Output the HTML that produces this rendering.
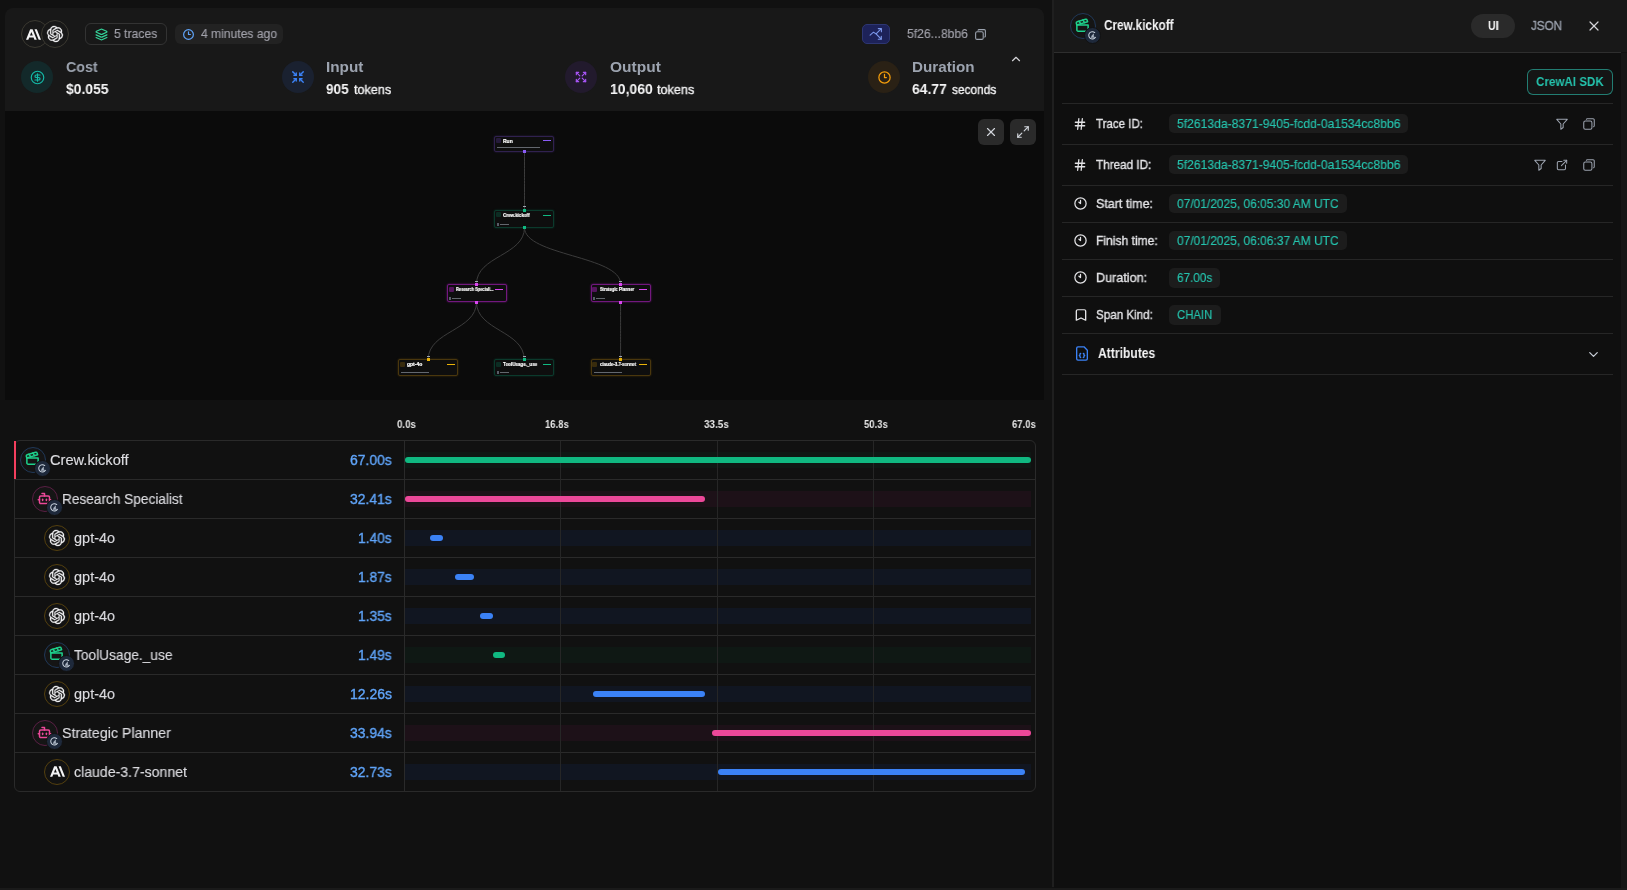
<!DOCTYPE html>
<html><head><meta charset="utf-8"><style>
html,body{margin:0;padding:0;width:1627px;height:890px;overflow:hidden;background:#111111;font-family:"Liberation Sans", sans-serif}
.t{position:absolute;line-height:1;white-space:nowrap;transform-origin:0 0;will-change:transform}
.b,.c{position:absolute}
.c{border-radius:50%;box-sizing:border-box}
svg{position:absolute;overflow:visible}
</style></head><body>
<div class="b" style="left:5px;top:8px;width:1039px;height:103px;background:#181818;border-radius:8px 8px 0 0"></div>
<div class="b" style="left:5px;top:111px;width:1039px;height:289px;background:#0b0b0b"></div>
<div class="b" style="left:1052px;top:0px;width:2px;height:887px;background:#1f1f1f"></div>
<div class="b" style="left:1054px;top:52px;width:567px;height:838px;background:#0f0f0f"></div>
<div class="b" style="left:1054px;top:0px;width:573px;height:52px;background:#181818"></div>
<div class="b" style="left:1054px;top:52px;width:567px;height:1px;background:#2e2e2e"></div>
<div class="b" style="left:1621px;top:53px;width:6px;height:837px;background:#161616"></div>
<div class="b" style="left:0px;top:888px;width:1627px;height:2px;background:#1a1a1a"></div>
<div class="c" style="left:20.5px;top:20.0px;width:28px;height:28px;background:#181818;border:1px solid #3b3931;"></div>
<div class="b" style="left:85.3px;top:23px;width:81.7px;height:21.8px;border:1px solid #333;border-radius:6px;box-sizing:border-box"></div>
<div class="b" style="left:175.3px;top:24px;width:107.5px;height:20px;background:#222;border-radius:6px"></div>
<div class="b" style="left:862px;top:24px;width:28px;height:19.5px;background:#1d2259;border:1px solid #2d3672;border-radius:5px;box-sizing:border-box"></div>
<div class="c" style="left:21.0px;top:61.0px;width:32px;height:32px;background:#13292a;"></div>
<div class="c" style="left:282.0px;top:61.0px;width:32px;height:32px;background:#1a2130;"></div>
<div class="c" style="left:565.0px;top:61.0px;width:32px;height:32px;background:#221a2d;"></div>
<div class="c" style="left:868.0px;top:61.0px;width:32px;height:32px;background:#2a2115;"></div>
<div class="b" style="left:978px;top:119px;width:26px;height:26px;background:#2a2a2a;border-radius:6px"></div>
<div class="b" style="left:1010px;top:119px;width:26px;height:26px;background:#2a2a2a;border-radius:6px"></div>
<div class="b" style="left:13.5px;top:440px;width:1022px;height:352px;border:1px solid #2a2a2a;border-radius:6px;box-sizing:border-box"></div>
<div class="b" style="left:14px;top:479px;width:1021px;height:1px;background:#2a2a2a"></div>
<div class="b" style="left:14px;top:518px;width:1021px;height:1px;background:#2a2a2a"></div>
<div class="b" style="left:14px;top:557px;width:1021px;height:1px;background:#2a2a2a"></div>
<div class="b" style="left:14px;top:596px;width:1021px;height:1px;background:#2a2a2a"></div>
<div class="b" style="left:14px;top:635px;width:1021px;height:1px;background:#2a2a2a"></div>
<div class="b" style="left:14px;top:674px;width:1021px;height:1px;background:#2a2a2a"></div>
<div class="b" style="left:14px;top:713px;width:1021px;height:1px;background:#2a2a2a"></div>
<div class="b" style="left:14px;top:752px;width:1021px;height:1px;background:#2a2a2a"></div>
<div class="b" style="left:404px;top:441px;width:1px;height:350px;background:#2a2a2a"></div>
<div class="b" style="left:14px;top:441px;width:2px;height:38px;background:#f43f5e"></div>
<div class="b" style="left:405px;top:451.5px;width:626.3px;height:16px;background:#0f1814"></div>
<div class="b" style="left:405px;top:490.5px;width:626.3px;height:16px;background:#1d1118"></div>
<div class="b" style="left:405px;top:529.5px;width:626.3px;height:16px;background:#111621"></div>
<div class="b" style="left:405px;top:568.5px;width:626.3px;height:16px;background:#111621"></div>
<div class="b" style="left:405px;top:607.5px;width:626.3px;height:16px;background:#111621"></div>
<div class="b" style="left:405px;top:646.5px;width:626.3px;height:16px;background:#0f1814"></div>
<div class="b" style="left:405px;top:685.5px;width:626.3px;height:16px;background:#111621"></div>
<div class="b" style="left:405px;top:724.5px;width:626.3px;height:16px;background:#1d1118"></div>
<div class="b" style="left:405px;top:763.5px;width:626.3px;height:16px;background:#111621"></div>
<div class="b" style="left:560px;top:441px;width:1px;height:350px;background:#262626"></div>
<div class="b" style="left:717px;top:441px;width:1px;height:350px;background:#262626"></div>
<div class="b" style="left:873px;top:441px;width:1px;height:350px;background:#262626"></div>
<div class="b" style="left:404.6px;top:456.5px;width:626.6999999999999px;height:6px;background:#10b981;border-radius:3px"></div>
<div class="b" style="left:404.8px;top:495.5px;width:299.90000000000003px;height:6px;background:#ec4899;border-radius:3px"></div>
<div class="b" style="left:429.6px;top:534.5px;width:13.399999999999977px;height:6px;background:#3b82f6;border-radius:3px"></div>
<div class="b" style="left:455.2px;top:573.5px;width:18.80000000000001px;height:6px;background:#3b82f6;border-radius:3px"></div>
<div class="b" style="left:480px;top:612.5px;width:13px;height:6px;background:#3b82f6;border-radius:3px"></div>
<div class="b" style="left:493px;top:651.5px;width:12.100000000000023px;height:6px;background:#10b981;border-radius:3px"></div>
<div class="b" style="left:592.8px;top:690.5px;width:112.40000000000009px;height:6px;background:#3b82f6;border-radius:3px"></div>
<div class="b" style="left:712px;top:729.5px;width:319.20000000000005px;height:6px;background:#ec4899;border-radius:3px"></div>
<div class="b" style="left:718.2px;top:768.5px;width:307.20000000000005px;height:6px;background:#3b82f6;border-radius:3px"></div>
<div class="b" style="left:1471px;top:14px;width:44px;height:23.7px;background:#2a2a2a;border-radius:12px"></div>
<div class="b" style="left:1527px;top:69px;width:86px;height:26px;border:1px solid rgba(45,212,191,0.55);border-radius:6px;box-sizing:border-box;background:#151515"></div>
<div class="b" style="left:1062px;top:103px;width:551px;height:1px;background:#262626"></div>
<div class="b" style="left:1062px;top:144px;width:551px;height:1px;background:#262626"></div>
<div class="b" style="left:1062px;top:185px;width:551px;height:1px;background:#262626"></div>
<div class="b" style="left:1062px;top:222px;width:551px;height:1px;background:#262626"></div>
<div class="b" style="left:1062px;top:259px;width:551px;height:1px;background:#262626"></div>
<div class="b" style="left:1062px;top:296px;width:551px;height:1px;background:#262626"></div>
<div class="b" style="left:1062px;top:333px;width:551px;height:1px;background:#262626"></div>
<div class="b" style="left:1062px;top:374px;width:551px;height:1px;background:#262626"></div>
<div class="b" style="left:1169px;top:113.7px;width:239px;height:19.6px;background:#1c1c1c;border-radius:5px"></div>
<div class="b" style="left:1169px;top:154.5px;width:239px;height:19.6px;background:#1c1c1c;border-radius:5px"></div>
<div class="b" style="left:1169px;top:193.89999999999998px;width:178px;height:19.6px;background:#1c1c1c;border-radius:5px"></div>
<div class="b" style="left:1169px;top:230.89999999999998px;width:178px;height:19.6px;background:#1c1c1c;border-radius:5px"></div>
<div class="b" style="left:1169px;top:268.0px;width:51px;height:19.6px;background:#1c1c1c;border-radius:5px"></div>
<div class="b" style="left:1169px;top:305.09999999999997px;width:52px;height:19.6px;background:#1c1c1c;border-radius:5px"></div>
<div class="c" style="left:20.0px;top:446.5px;width:26px;height:26px;background:#151515;border:1px solid #203858;"></div>
<svg style="left:25.0px;top:451.0px" width="15" height="15" viewBox="0 0 24 24" fill="none" stroke="#1ed18c" stroke-width="2.4" stroke-linecap="round" stroke-linejoin="round"><path d="M20.2 6 3 11l-.9-2.4c-.3-1.1.3-2.2 1.3-2.5l13.5-4c1.1-.3 2.2.3 2.5 1.3Z"/><path d="m6.2 5.3 3.1 3.9"/><path d="m12.4 3.4 3.1 4"/><path d="M3 11h18v8a2 2 0 0 1-2 2H5a2 2 0 0 1-2-2Z"/></svg>
<div class="c" style="left:33.5px;top:460.0px;width:17px;height:17px;background:#1e293b;border:1px solid #111111;;border-width:1.5px"></div>
<svg style="left:36.5px;top:463.0px" width="11" height="11" viewBox="0 0 24 24" fill="none" stroke="#cbd5e1" stroke-width="2.2" stroke-linecap="round" stroke-linejoin="round"><path d="M17 5.5A8 8 0 1 0 18.5 16"/><path d="M9.5 16.5c.5-3.5 2.5-6.5 5-8-.8 2.5-.3 5.5 1.5 8z" fill="#aab4c3" stroke-width="1"/></svg>
<div class="c" style="left:32.0px;top:485.5px;width:26px;height:26px;background:#151515;border:1px solid #5a1f44;"></div>
<svg style="left:36.5px;top:490.5px" width="15" height="15" viewBox="0 0 24 24" fill="none" stroke="#ec4899" stroke-width="2.4" stroke-linecap="round" stroke-linejoin="round"><path d="M12 8V4H8"/><rect width="16" height="12" x="4" y="8" rx="2"/><path d="M2 14h2"/><path d="M20 14h2"/><path d="M15 13v2"/><path d="M9 13v2"/></svg>
<div class="c" style="left:45.5px;top:499.2px;width:17px;height:17px;background:#1e293b;border:1px solid #111111;;border-width:1.5px"></div>
<svg style="left:48.5px;top:502.2px" width="11" height="11" viewBox="0 0 24 24" fill="none" stroke="#cbd5e1" stroke-width="2.2" stroke-linecap="round" stroke-linejoin="round"><path d="M17 5.5A8 8 0 1 0 18.5 16"/><path d="M9.5 16.5c.5-3.5 2.5-6.5 5-8-.8 2.5-.3 5.5 1.5 8z" fill="#aab4c3" stroke-width="1"/></svg>
<div class="c" style="left:44.0px;top:524.5px;width:26px;height:26px;background:#121212;border:1px solid #54400f;"></div>
<svg style="left:49.0px;top:529.5px" width="16" height="16" viewBox="0 0 24 24" fill="#f4f4f5" stroke="#f4f4f5" stroke-width="0.5"><path d="M22.2819 9.8211a5.9847 5.9847 0 0 0-.5157-4.9108 6.0462 6.0462 0 0 0-6.5098-2.9A6.0651 6.0651 0 0 0 4.9807 4.1818a5.9847 5.9847 0 0 0-3.9977 2.9 6.0462 6.0462 0 0 0 .7427 7.0966 5.98 5.98 0 0 0 .511 4.9107 6.051 6.051 0 0 0 6.5146 2.9001A5.9847 5.9847 0 0 0 13.2599 24a6.0557 6.0557 0 0 0 5.7718-4.2058 5.9894 5.9894 0 0 0 3.9977-2.9001 6.0557 6.0557 0 0 0-.7475-7.0729zm-9.022 12.6081a4.4755 4.4755 0 0 1-2.8764-1.0408l.1419-.0804 4.7783-2.7582a.7948.7948 0 0 0 .3927-.6813v-6.7369l2.02 1.1686a.071.071 0 0 1 .038.052v5.5826a4.504 4.504 0 0 1-4.4945 4.4944zm-9.6607-4.1254a4.4708 4.4708 0 0 1-.5346-3.0137l.142.0852 4.783 2.7582a.7712.7712 0 0 0 .7806 0l5.8428-3.3685v2.3324a.0804.0804 0 0 1-.0332.0615L9.74 19.9502a4.4992 4.4992 0 0 1-6.1408-1.6464zM2.3408 7.8956a4.485 4.485 0 0 1 2.3655-1.9728V11.6a.7664.7664 0 0 0 .3879.6765l5.8144 3.3543-2.0201 1.1685a.0757.0757 0 0 1-.071 0l-4.8303-2.7865A4.504 4.504 0 0 1 2.3408 7.872zm16.5963 3.8558L13.1038 8.364 15.1192 7.2a.0757.0757 0 0 1 .071 0l4.8303 2.7913a4.4944 4.4944 0 0 1-.6765 8.1042v-5.6772a.79.79 0 0 0-.407-.667zm2.0107-3.0231l-.142-.0852-4.7735-2.7818a.7759.7759 0 0 0-.7854 0L9.409 9.2297V6.8974a.0662.0662 0 0 1 .0284-.0615l4.8303-2.7866a4.4992 4.4992 0 0 1 6.6802 4.66zM8.3065 12.863l-2.02-1.1638a.0804.0804 0 0 1-.038-.0567V6.0742a4.4992 4.4992 0 0 1 7.3757-3.4537l-.142.0805L8.704 5.459a.7948.7948 0 0 0-.3927.6813zm1.0976-2.3654l2.602-1.4998 2.6069 1.4998v2.9994l-2.5974 1.4997-2.6067-1.4997Z"/></svg>
<div class="c" style="left:44.0px;top:563.5px;width:26px;height:26px;background:#121212;border:1px solid #54400f;"></div>
<svg style="left:49.0px;top:568.5px" width="16" height="16" viewBox="0 0 24 24" fill="#f4f4f5" stroke="#f4f4f5" stroke-width="0.5"><path d="M22.2819 9.8211a5.9847 5.9847 0 0 0-.5157-4.9108 6.0462 6.0462 0 0 0-6.5098-2.9A6.0651 6.0651 0 0 0 4.9807 4.1818a5.9847 5.9847 0 0 0-3.9977 2.9 6.0462 6.0462 0 0 0 .7427 7.0966 5.98 5.98 0 0 0 .511 4.9107 6.051 6.051 0 0 0 6.5146 2.9001A5.9847 5.9847 0 0 0 13.2599 24a6.0557 6.0557 0 0 0 5.7718-4.2058 5.9894 5.9894 0 0 0 3.9977-2.9001 6.0557 6.0557 0 0 0-.7475-7.0729zm-9.022 12.6081a4.4755 4.4755 0 0 1-2.8764-1.0408l.1419-.0804 4.7783-2.7582a.7948.7948 0 0 0 .3927-.6813v-6.7369l2.02 1.1686a.071.071 0 0 1 .038.052v5.5826a4.504 4.504 0 0 1-4.4945 4.4944zm-9.6607-4.1254a4.4708 4.4708 0 0 1-.5346-3.0137l.142.0852 4.783 2.7582a.7712.7712 0 0 0 .7806 0l5.8428-3.3685v2.3324a.0804.0804 0 0 1-.0332.0615L9.74 19.9502a4.4992 4.4992 0 0 1-6.1408-1.6464zM2.3408 7.8956a4.485 4.485 0 0 1 2.3655-1.9728V11.6a.7664.7664 0 0 0 .3879.6765l5.8144 3.3543-2.0201 1.1685a.0757.0757 0 0 1-.071 0l-4.8303-2.7865A4.504 4.504 0 0 1 2.3408 7.872zm16.5963 3.8558L13.1038 8.364 15.1192 7.2a.0757.0757 0 0 1 .071 0l4.8303 2.7913a4.4944 4.4944 0 0 1-.6765 8.1042v-5.6772a.79.79 0 0 0-.407-.667zm2.0107-3.0231l-.142-.0852-4.7735-2.7818a.7759.7759 0 0 0-.7854 0L9.409 9.2297V6.8974a.0662.0662 0 0 1 .0284-.0615l4.8303-2.7866a4.4992 4.4992 0 0 1 6.6802 4.66zM8.3065 12.863l-2.02-1.1638a.0804.0804 0 0 1-.038-.0567V6.0742a4.4992 4.4992 0 0 1 7.3757-3.4537l-.142.0805L8.704 5.459a.7948.7948 0 0 0-.3927.6813zm1.0976-2.3654l2.602-1.4998 2.6069 1.4998v2.9994l-2.5974 1.4997-2.6067-1.4997Z"/></svg>
<div class="c" style="left:44.0px;top:602.5px;width:26px;height:26px;background:#121212;border:1px solid #54400f;"></div>
<svg style="left:49.0px;top:607.5px" width="16" height="16" viewBox="0 0 24 24" fill="#f4f4f5" stroke="#f4f4f5" stroke-width="0.5"><path d="M22.2819 9.8211a5.9847 5.9847 0 0 0-.5157-4.9108 6.0462 6.0462 0 0 0-6.5098-2.9A6.0651 6.0651 0 0 0 4.9807 4.1818a5.9847 5.9847 0 0 0-3.9977 2.9 6.0462 6.0462 0 0 0 .7427 7.0966 5.98 5.98 0 0 0 .511 4.9107 6.051 6.051 0 0 0 6.5146 2.9001A5.9847 5.9847 0 0 0 13.2599 24a6.0557 6.0557 0 0 0 5.7718-4.2058 5.9894 5.9894 0 0 0 3.9977-2.9001 6.0557 6.0557 0 0 0-.7475-7.0729zm-9.022 12.6081a4.4755 4.4755 0 0 1-2.8764-1.0408l.1419-.0804 4.7783-2.7582a.7948.7948 0 0 0 .3927-.6813v-6.7369l2.02 1.1686a.071.071 0 0 1 .038.052v5.5826a4.504 4.504 0 0 1-4.4945 4.4944zm-9.6607-4.1254a4.4708 4.4708 0 0 1-.5346-3.0137l.142.0852 4.783 2.7582a.7712.7712 0 0 0 .7806 0l5.8428-3.3685v2.3324a.0804.0804 0 0 1-.0332.0615L9.74 19.9502a4.4992 4.4992 0 0 1-6.1408-1.6464zM2.3408 7.8956a4.485 4.485 0 0 1 2.3655-1.9728V11.6a.7664.7664 0 0 0 .3879.6765l5.8144 3.3543-2.0201 1.1685a.0757.0757 0 0 1-.071 0l-4.8303-2.7865A4.504 4.504 0 0 1 2.3408 7.872zm16.5963 3.8558L13.1038 8.364 15.1192 7.2a.0757.0757 0 0 1 .071 0l4.8303 2.7913a4.4944 4.4944 0 0 1-.6765 8.1042v-5.6772a.79.79 0 0 0-.407-.667zm2.0107-3.0231l-.142-.0852-4.7735-2.7818a.7759.7759 0 0 0-.7854 0L9.409 9.2297V6.8974a.0662.0662 0 0 1 .0284-.0615l4.8303-2.7866a4.4992 4.4992 0 0 1 6.6802 4.66zM8.3065 12.863l-2.02-1.1638a.0804.0804 0 0 1-.038-.0567V6.0742a4.4992 4.4992 0 0 1 7.3757-3.4537l-.142.0805L8.704 5.459a.7948.7948 0 0 0-.3927.6813zm1.0976-2.3654l2.602-1.4998 2.6069 1.4998v2.9994l-2.5974 1.4997-2.6067-1.4997Z"/></svg>
<div class="c" style="left:44.0px;top:641.5px;width:26px;height:26px;background:#151515;border:1px solid #203858;"></div>
<svg style="left:49.0px;top:646.0px" width="15" height="15" viewBox="0 0 24 24" fill="none" stroke="#1ed18c" stroke-width="2.4" stroke-linecap="round" stroke-linejoin="round"><path d="M20.2 6 3 11l-.9-2.4c-.3-1.1.3-2.2 1.3-2.5l13.5-4c1.1-.3 2.2.3 2.5 1.3Z"/><path d="m6.2 5.3 3.1 3.9"/><path d="m12.4 3.4 3.1 4"/><path d="M3 11h18v8a2 2 0 0 1-2 2H5a2 2 0 0 1-2-2Z"/></svg>
<div class="c" style="left:57.5px;top:655.0px;width:17px;height:17px;background:#1e293b;border:1px solid #111111;;border-width:1.5px"></div>
<svg style="left:60.5px;top:658.0px" width="11" height="11" viewBox="0 0 24 24" fill="none" stroke="#cbd5e1" stroke-width="2.2" stroke-linecap="round" stroke-linejoin="round"><path d="M17 5.5A8 8 0 1 0 18.5 16"/><path d="M9.5 16.5c.5-3.5 2.5-6.5 5-8-.8 2.5-.3 5.5 1.5 8z" fill="#aab4c3" stroke-width="1"/></svg>
<div class="c" style="left:44.0px;top:680.5px;width:26px;height:26px;background:#121212;border:1px solid #54400f;"></div>
<svg style="left:49.0px;top:685.5px" width="16" height="16" viewBox="0 0 24 24" fill="#f4f4f5" stroke="#f4f4f5" stroke-width="0.5"><path d="M22.2819 9.8211a5.9847 5.9847 0 0 0-.5157-4.9108 6.0462 6.0462 0 0 0-6.5098-2.9A6.0651 6.0651 0 0 0 4.9807 4.1818a5.9847 5.9847 0 0 0-3.9977 2.9 6.0462 6.0462 0 0 0 .7427 7.0966 5.98 5.98 0 0 0 .511 4.9107 6.051 6.051 0 0 0 6.5146 2.9001A5.9847 5.9847 0 0 0 13.2599 24a6.0557 6.0557 0 0 0 5.7718-4.2058 5.9894 5.9894 0 0 0 3.9977-2.9001 6.0557 6.0557 0 0 0-.7475-7.0729zm-9.022 12.6081a4.4755 4.4755 0 0 1-2.8764-1.0408l.1419-.0804 4.7783-2.7582a.7948.7948 0 0 0 .3927-.6813v-6.7369l2.02 1.1686a.071.071 0 0 1 .038.052v5.5826a4.504 4.504 0 0 1-4.4945 4.4944zm-9.6607-4.1254a4.4708 4.4708 0 0 1-.5346-3.0137l.142.0852 4.783 2.7582a.7712.7712 0 0 0 .7806 0l5.8428-3.3685v2.3324a.0804.0804 0 0 1-.0332.0615L9.74 19.9502a4.4992 4.4992 0 0 1-6.1408-1.6464zM2.3408 7.8956a4.485 4.485 0 0 1 2.3655-1.9728V11.6a.7664.7664 0 0 0 .3879.6765l5.8144 3.3543-2.0201 1.1685a.0757.0757 0 0 1-.071 0l-4.8303-2.7865A4.504 4.504 0 0 1 2.3408 7.872zm16.5963 3.8558L13.1038 8.364 15.1192 7.2a.0757.0757 0 0 1 .071 0l4.8303 2.7913a4.4944 4.4944 0 0 1-.6765 8.1042v-5.6772a.79.79 0 0 0-.407-.667zm2.0107-3.0231l-.142-.0852-4.7735-2.7818a.7759.7759 0 0 0-.7854 0L9.409 9.2297V6.8974a.0662.0662 0 0 1 .0284-.0615l4.8303-2.7866a4.4992 4.4992 0 0 1 6.6802 4.66zM8.3065 12.863l-2.02-1.1638a.0804.0804 0 0 1-.038-.0567V6.0742a4.4992 4.4992 0 0 1 7.3757-3.4537l-.142.0805L8.704 5.459a.7948.7948 0 0 0-.3927.6813zm1.0976-2.3654l2.602-1.4998 2.6069 1.4998v2.9994l-2.5974 1.4997-2.6067-1.4997Z"/></svg>
<div class="c" style="left:32.0px;top:719.5px;width:26px;height:26px;background:#151515;border:1px solid #5a1f44;"></div>
<svg style="left:36.5px;top:724.5px" width="15" height="15" viewBox="0 0 24 24" fill="none" stroke="#ec4899" stroke-width="2.4" stroke-linecap="round" stroke-linejoin="round"><path d="M12 8V4H8"/><rect width="16" height="12" x="4" y="8" rx="2"/><path d="M2 14h2"/><path d="M20 14h2"/><path d="M15 13v2"/><path d="M9 13v2"/></svg>
<div class="c" style="left:45.5px;top:733.2px;width:17px;height:17px;background:#1e293b;border:1px solid #111111;;border-width:1.5px"></div>
<svg style="left:48.5px;top:736.2px" width="11" height="11" viewBox="0 0 24 24" fill="none" stroke="#cbd5e1" stroke-width="2.2" stroke-linecap="round" stroke-linejoin="round"><path d="M17 5.5A8 8 0 1 0 18.5 16"/><path d="M9.5 16.5c.5-3.5 2.5-6.5 5-8-.8 2.5-.3 5.5 1.5 8z" fill="#aab4c3" stroke-width="1"/></svg>
<div class="c" style="left:44.0px;top:758.5px;width:26px;height:26px;background:#121212;border:1px solid #54400f;"></div>
<svg style="left:49.5px;top:764.0px" width="15" height="15" viewBox="0 0 24 24" fill="#f4f4f5"><path d="M17.3041 3.541h-3.6718l6.696 16.918H24Zm-10.6082 0L0 20.459h3.7442l1.3693-3.5527h7.0052l1.3693 3.5528h3.7442L10.5363 3.5409Zm-.3712 10.2232 2.2914-5.9456 2.2914 5.9456Z"/></svg>
<div class="c" style="left:1070.0px;top:13.0px;width:26px;height:26px;background:#151515;border:1px solid #203858;"></div>
<svg style="left:1075.0px;top:17.5px" width="15" height="15" viewBox="0 0 24 24" fill="none" stroke="#1ed18c" stroke-width="2.4" stroke-linecap="round" stroke-linejoin="round"><path d="M20.2 6 3 11l-.9-2.4c-.3-1.1.3-2.2 1.3-2.5l13.5-4c1.1-.3 2.2.3 2.5 1.3Z"/><path d="m6.2 5.3 3.1 3.9"/><path d="m12.4 3.4 3.1 4"/><path d="M3 11h18v8a2 2 0 0 1-2 2H5a2 2 0 0 1-2-2Z"/></svg>
<div class="c" style="left:1083.5px;top:26.5px;width:17px;height:17px;background:#1e293b;border:1px solid #111111;;border-width:1.5px"></div>
<svg style="left:1086.5px;top:29.5px" width="11" height="11" viewBox="0 0 24 24" fill="none" stroke="#cbd5e1" stroke-width="2.2" stroke-linecap="round" stroke-linejoin="round"><path d="M17 5.5A8 8 0 1 0 18.5 16"/><path d="M9.5 16.5c.5-3.5 2.5-6.5 5-8-.8 2.5-.3 5.5 1.5 8z" fill="#aab4c3" stroke-width="1"/></svg>
<svg style="left:26.0px;top:26.5px" width="15" height="15" viewBox="0 0 24 24" fill="#f4f4f5"><path d="M17.3041 3.541h-3.6718l6.696 16.918H24Zm-10.6082 0L0 20.459h3.7442l1.3693-3.5527h7.0052l1.3693 3.5528h3.7442L10.5363 3.5409Zm-.3712 10.2232 2.2914-5.9456 2.2914 5.9456Z"/></svg>
<div class="c" style="left:41.3px;top:20.0px;width:28px;height:28px;background:#181818;border:1px solid #3b3931;"></div>
<svg style="left:47.0px;top:26.0px" width="16" height="16" viewBox="0 0 24 24" fill="#f4f4f5" stroke="#f4f4f5" stroke-width="0.5"><path d="M22.2819 9.8211a5.9847 5.9847 0 0 0-.5157-4.9108 6.0462 6.0462 0 0 0-6.5098-2.9A6.0651 6.0651 0 0 0 4.9807 4.1818a5.9847 5.9847 0 0 0-3.9977 2.9 6.0462 6.0462 0 0 0 .7427 7.0966 5.98 5.98 0 0 0 .511 4.9107 6.051 6.051 0 0 0 6.5146 2.9001A5.9847 5.9847 0 0 0 13.2599 24a6.0557 6.0557 0 0 0 5.7718-4.2058 5.9894 5.9894 0 0 0 3.9977-2.9001 6.0557 6.0557 0 0 0-.7475-7.0729zm-9.022 12.6081a4.4755 4.4755 0 0 1-2.8764-1.0408l.1419-.0804 4.7783-2.7582a.7948.7948 0 0 0 .3927-.6813v-6.7369l2.02 1.1686a.071.071 0 0 1 .038.052v5.5826a4.504 4.504 0 0 1-4.4945 4.4944zm-9.6607-4.1254a4.4708 4.4708 0 0 1-.5346-3.0137l.142.0852 4.783 2.7582a.7712.7712 0 0 0 .7806 0l5.8428-3.3685v2.3324a.0804.0804 0 0 1-.0332.0615L9.74 19.9502a4.4992 4.4992 0 0 1-6.1408-1.6464zM2.3408 7.8956a4.485 4.485 0 0 1 2.3655-1.9728V11.6a.7664.7664 0 0 0 .3879.6765l5.8144 3.3543-2.0201 1.1685a.0757.0757 0 0 1-.071 0l-4.8303-2.7865A4.504 4.504 0 0 1 2.3408 7.872zm16.5963 3.8558L13.1038 8.364 15.1192 7.2a.0757.0757 0 0 1 .071 0l4.8303 2.7913a4.4944 4.4944 0 0 1-.6765 8.1042v-5.6772a.79.79 0 0 0-.407-.667zm2.0107-3.0231l-.142-.0852-4.7735-2.7818a.7759.7759 0 0 0-.7854 0L9.409 9.2297V6.8974a.0662.0662 0 0 1 .0284-.0615l4.8303-2.7866a4.4992 4.4992 0 0 1 6.6802 4.66zM8.3065 12.863l-2.02-1.1638a.0804.0804 0 0 1-.038-.0567V6.0742a4.4992 4.4992 0 0 1 7.3757-3.4537l-.142.0805L8.704 5.459a.7948.7948 0 0 0-.3927.6813zm1.0976-2.3654l2.602-1.4998 2.6069 1.4998v2.9994l-2.5974 1.4997-2.6067-1.4997Z"/></svg>
<svg style="left:94.5px;top:28.0px" width="13" height="13" viewBox="0 0 24 24" fill="none" stroke="#34d399" stroke-width="2.2" stroke-linecap="round" stroke-linejoin="round"><path d="m12.83 2.18a2 2 0 0 0-1.66 0L2.6 6.08a1 1 0 0 0 0 1.83l8.58 3.91a2 2 0 0 0 1.66 0l8.58-3.9a1 1 0 0 0 0-1.83Z"/><path d="m22 17.65-9.17 4.16a2 2 0 0 1-1.66 0L2 17.65"/><path d="m22 12.65-9.17 4.16a2 2 0 0 1-1.66 0L2 12.65"/></svg>
<svg style="left:181.5px;top:28.0px" width="13" height="13" viewBox="0 0 24 24" fill="none" stroke="#60a5fa" stroke-width="2.2" stroke-linecap="round" stroke-linejoin="round"><circle cx="12" cy="12" r="9"/><path d="M12 7v5h3.5"/></svg>
<svg style="left:869.0px;top:27.0px" width="14" height="14" viewBox="0 0 14 14" fill="none" stroke="#7b97ea" stroke-width="1.1" stroke-linecap="round" stroke-linejoin="round"><path d="M1.1 8.2 4.5 5.2 7.1 6.9 11.8 2.2"/><path d="M9.3 1.6H12.4V4.7"/><path d="M7.1 6.9 12.1 12"/><path d="M9.3 12.2H12.3V9.2"/></svg>
<svg style="left:974.0px;top:27.5px" width="13" height="13" viewBox="0 0 24 24" fill="none" stroke="#9ca3af" stroke-width="2" stroke-linecap="round" stroke-linejoin="round"><g transform="translate(24,0) scale(-1,1)"><path d="M7 9.667a2.667 2.667 0 0 1 2.667-2.667h8.666a2.667 2.667 0 0 1 2.667 2.667v8.666a2.667 2.667 0 0 1-2.667 2.667h-8.666a2.667 2.667 0 0 1-2.667-2.667z"/><path d="M4.012 16.737a2 2 0 0 1-1.012-1.737v-10c0-1.1.9-2 2-2h10c.75 0 1.158.385 1.5 1"/></g></svg>
<svg style="left:1009.0px;top:52.0px" width="14" height="14" viewBox="0 0 24 24" fill="none" stroke="#d4d4d8" stroke-width="2" stroke-linecap="round" stroke-linejoin="round"><path d="m18 15-6-6-6 6"/></svg>
<svg style="left:29.5px;top:69.5px" width="15" height="15" viewBox="0 0 24 24" fill="none" stroke="#14b8a6" stroke-width="1.9" stroke-linecap="round" stroke-linejoin="round"><circle cx="12" cy="12" r="10"/><path d="M16 8h-6a2 2 0 1 0 0 4h4a2 2 0 1 1 0 4H8"/><path d="M12 18V6"/></svg>
<svg style="left:291.0px;top:70.0px" width="14" height="14" viewBox="0 0 24 24" fill="none" stroke="#3b82f6" stroke-width="2.3" stroke-linecap="round" stroke-linejoin="round"><path d="M5 9h4V5"/><path d="M3 3l6 6"/><path d="M5 15h4v4"/><path d="M3 21l6-6"/><path d="M19 9h-4V5"/><path d="M15 9l6-6"/><path d="M19 15h-4v4"/><path d="M15 15l6 6"/></svg>
<svg style="left:574.0px;top:70.0px" width="14" height="14" viewBox="0 0 24 24" fill="none" stroke="#a855f7" stroke-width="2" stroke-linecap="round" stroke-linejoin="round"><path d="M16 4h4v4"/><path d="M14 10l6-6"/><path d="M8 20H4v-4"/><path d="M4 20l6-6"/><path d="M16 20h4v-4"/><path d="M14 14l6 6"/><path d="M8 4H4v4"/><path d="M4 4l6 6"/></svg>
<svg style="left:876.5px;top:69.5px" width="15" height="15" viewBox="0 0 24 24" fill="none" stroke="#f59e0b" stroke-width="2" stroke-linecap="round" stroke-linejoin="round"><circle cx="12" cy="12" r="9"/><path d="M12 7v5h3"/></svg>
<svg style="left:984.0px;top:125.0px" width="14" height="14" viewBox="0 0 24 24" fill="none" stroke="#d1d5db" stroke-width="2" stroke-linecap="round" stroke-linejoin="round"><path d="M18 6 6 18"/><path d="m6 6 12 12"/></svg>
<svg style="left:1016.0px;top:125.0px" width="14" height="14" viewBox="0 0 24 24" fill="none" stroke="#d1d5db" stroke-width="2" stroke-linecap="round" stroke-linejoin="round"><path d="M15 3h6v6"/><path d="M9 21H3v-6"/><path d="M21 3l-7 7"/><path d="M3 21l7-7"/></svg>
<svg style="left:1586.0px;top:18.0px" width="16" height="16" viewBox="0 0 24 24" fill="none" stroke="#d4d4d8" stroke-width="1.8" stroke-linecap="round" stroke-linejoin="round"><path d="M18 6 6 18"/><path d="m6 6 12 12"/></svg>
<svg style="left:1073.0px;top:116.5px" width="14" height="14" viewBox="0 0 24 24" fill="none" stroke="#e4e4e7" stroke-width="2.2" stroke-linecap="round" stroke-linejoin="round"><line x1="4" x2="20" y1="9" y2="9"/><line x1="4" x2="20" y1="15" y2="15"/><line x1="10" x2="8" y1="3" y2="21"/><line x1="16" x2="14" y1="3" y2="21"/></svg>
<svg style="left:1073.0px;top:157.5px" width="14" height="14" viewBox="0 0 24 24" fill="none" stroke="#e4e4e7" stroke-width="2.2" stroke-linecap="round" stroke-linejoin="round"><line x1="4" x2="20" y1="9" y2="9"/><line x1="4" x2="20" y1="15" y2="15"/><line x1="10" x2="8" y1="3" y2="21"/><line x1="16" x2="14" y1="3" y2="21"/></svg>
<svg style="left:1072.5px;top:196.0px" width="15" height="15" viewBox="0 0 24 24" fill="none" stroke="#e4e4e7" stroke-width="2" stroke-linecap="round" stroke-linejoin="round"><circle cx="12" cy="12" r="9"/><path d="M12 7v5l-2.5-2"/></svg>
<svg style="left:1072.5px;top:233.0px" width="15" height="15" viewBox="0 0 24 24" fill="none" stroke="#e4e4e7" stroke-width="2" stroke-linecap="round" stroke-linejoin="round"><circle cx="12" cy="12" r="9"/><path d="M12 7v5l-2.5-2"/></svg>
<svg style="left:1072.5px;top:270.0px" width="15" height="15" viewBox="0 0 24 24" fill="none" stroke="#e4e4e7" stroke-width="2" stroke-linecap="round" stroke-linejoin="round"><circle cx="12" cy="12" r="9"/><path d="M12 7v5l-2.5-2"/></svg>
<svg style="left:1072.8px;top:308.0px" width="16" height="14" viewBox="0 0 24 24" fill="none" stroke="#e4e4e7" stroke-width="2" stroke-linecap="round" stroke-linejoin="round" preserveAspectRatio="none"><path d="m19 21-7-4-7 4V5a2 2 0 0 1 2-2h10a2 2 0 0 1 2 2v16z"/></svg>
<svg style="left:1074.0px;top:345.0px" width="16" height="17" viewBox="0 0 24 24" fill="none" stroke="#3b82f6" stroke-width="2" stroke-linecap="round" stroke-linejoin="round"><path d="M15 2H6a2 2 0 0 0-2 2v16a2 2 0 0 0 2 2h12a2 2 0 0 0 2-2V7Z"/><path d="M10 12a1 1 0 0 0-1 1v1a1 1 0 0 1-1 1 1 1 0 0 1 1 1v1a1 1 0 0 0 1 1"/><path d="M14 18a1 1 0 0 0 1-1v-1a1 1 0 0 1 1-1 1 1 0 0 1-1-1v-1a1 1 0 0 0-1-1"/></svg>
<svg style="left:1586.0px;top:347.0px" width="15" height="15" viewBox="0 0 24 24" fill="none" stroke="#c9ced8" stroke-width="2" stroke-linecap="round" stroke-linejoin="round"><path d="m6 9 6 6 6-6"/></svg>
<svg style="left:1555.0px;top:117.0px" width="14" height="14" viewBox="0 0 24 24" fill="none" stroke="#9ca3af" stroke-width="1.8" stroke-linecap="round" stroke-linejoin="round"><path d="M3 4h18l-7 8v6l-4 3v-9z"/></svg>
<svg style="left:1582.0px;top:117.0px" width="14" height="14" viewBox="0 0 24 24" fill="none" stroke="#9ca3af" stroke-width="1.8" stroke-linecap="round" stroke-linejoin="round"><g transform="translate(24,0) scale(-1,1)"><path d="M7 9.667a2.667 2.667 0 0 1 2.667-2.667h8.666a2.667 2.667 0 0 1 2.667 2.667v8.666a2.667 2.667 0 0 1-2.667 2.667h-8.666a2.667 2.667 0 0 1-2.667-2.667z"/><path d="M4.012 16.737a2 2 0 0 1-1.012-1.737v-10c0-1.1.9-2 2-2h10c.75 0 1.158.385 1.5 1"/></g></svg>
<svg style="left:1533.0px;top:158.0px" width="14" height="14" viewBox="0 0 24 24" fill="none" stroke="#9ca3af" stroke-width="1.8" stroke-linecap="round" stroke-linejoin="round"><path d="M3 4h18l-7 8v6l-4 3v-9z"/></svg>
<svg style="left:1555.0px;top:158.0px" width="14" height="14" viewBox="0 0 24 24" fill="none" stroke="#9ca3af" stroke-width="1.8" stroke-linecap="round" stroke-linejoin="round"><path d="M12 6H6a2 2 0 0 0-2 2v10a2 2 0 0 0 2 2h10a2 2 0 0 0 2-2v-6"/><path d="M11 13l9-9"/><path d="M15 4h5v5"/></svg>
<svg style="left:1582.0px;top:158.0px" width="14" height="14" viewBox="0 0 24 24" fill="none" stroke="#9ca3af" stroke-width="1.8" stroke-linecap="round" stroke-linejoin="round"><g transform="translate(24,0) scale(-1,1)"><path d="M7 9.667a2.667 2.667 0 0 1 2.667-2.667h8.666a2.667 2.667 0 0 1 2.667 2.667v8.666a2.667 2.667 0 0 1-2.667 2.667h-8.666a2.667 2.667 0 0 1-2.667-2.667z"/><path d="M4.012 16.737a2 2 0 0 1-1.012-1.737v-10c0-1.1.9-2 2-2h10c.75 0 1.158.385 1.5 1"/></g></svg>
<svg style="left:0;top:0" width="1627" height="890" fill="none" stroke="#3c3c3c" stroke-width="1"><path d="M524.5,151.5 C524.5,180.5 524.5,180.5 524.5,209.5"/><path d="M524.5,227.5 C524.5,255.75 476.5,255.75 476.5,284"/><path d="M524.5,227.5 C524.5,255.75 620.6,255.75 620.6,284"/><path d="M476.5,302 C476.5,330.75 428.2,330.75 428.2,359.5"/><path d="M476.5,302 C476.5,330.75 524.2,330.75 524.2,359.5"/><path d="M620.6,302 C620.6,330.75 620.6,330.75 620.6,359.5"/></svg>
<div class="b" style="left:494.2px;top:135.5px;width:60px;height:16px;box-sizing:border-box;border:1px solid #30214f;border-radius:2px;background:#0e0e0e;box-shadow:0 0 2px #30214f"></div>
<div class="b" style="left:496.0px;top:138.1px;width:5px;height:5px;background:#30214f;border-radius:1px;opacity:.7"></div>
<div class="t" style="left:503.2px;top:138.5px;font-size:5px;font-weight:700;color:#ffffff;transform:scaleX(1);transform-origin:0 0;-webkit-text-stroke:0.2px #fff">Run</div>
<div class="b" style="left:542.7px;top:140.3px;width:8px;height:1px;background:#8b5cf6"></div>
<div class="b" style="left:497.2px;top:147.0px;width:43px;height:1px;background:#9ca3af;opacity:.6"></div>
<div class="b" style="left:494.2px;top:209.7px;width:60px;height:18px;box-sizing:border-box;border:1px solid #0b3a2c;border-radius:2px;background:#0e0e0e;box-shadow:0 0 2px #0b3a2c"></div>
<div class="b" style="left:496.0px;top:212.29999999999998px;width:5px;height:5px;background:#0b3a2c;border-radius:1px;opacity:.7"></div>
<div class="t" style="left:503.2px;top:212.7px;font-size:5px;font-weight:700;color:#ffffff;transform:scaleX(0.9);transform-origin:0 0;-webkit-text-stroke:0.2px #fff">Crew.kickoff</div>
<div class="b" style="left:542.7px;top:214.5px;width:8px;height:1px;background:#10b981"></div>
<div class="b" style="left:496.7px;top:222.5px;width:2px;height:3px;background:#6b7280;opacity:.8"></div>
<div class="b" style="left:499.7px;top:223.5px;width:9px;height:1px;background:#9ca3af;opacity:.6"></div>
<div class="b" style="left:446.7px;top:284.3px;width:60px;height:18px;box-sizing:border-box;border:1px solid #72187e;border-radius:2px;background:#0e0e0e;box-shadow:0 0 2px #72187e"></div>
<div class="b" style="left:448.5px;top:286.90000000000003px;width:5px;height:5px;background:#72187e;border-radius:1px;opacity:.7"></div>
<div class="t" style="left:455.7px;top:287.3px;font-size:5px;font-weight:700;color:#ffffff;transform:scaleX(0.8);transform-origin:0 0;-webkit-text-stroke:0.2px #fff">Research Speciali...</div>
<div class="b" style="left:495.2px;top:289.1px;width:8px;height:1px;background:#d946ef"></div>
<div class="b" style="left:449.2px;top:297.1px;width:2px;height:3px;background:#6b7280;opacity:.8"></div>
<div class="b" style="left:452.2px;top:298.1px;width:9px;height:1px;background:#9ca3af;opacity:.6"></div>
<div class="b" style="left:590.5px;top:284.3px;width:60px;height:18px;box-sizing:border-box;border:1px solid #72187e;border-radius:2px;background:#0e0e0e;box-shadow:0 0 2px #72187e"></div>
<div class="b" style="left:592.3px;top:286.90000000000003px;width:5px;height:5px;background:#72187e;border-radius:1px;opacity:.7"></div>
<div class="t" style="left:599.5px;top:287.3px;font-size:5px;font-weight:700;color:#ffffff;transform:scaleX(0.83);transform-origin:0 0;-webkit-text-stroke:0.2px #fff">Strategic Planner</div>
<div class="b" style="left:639.0px;top:289.1px;width:8px;height:1px;background:#d946ef"></div>
<div class="b" style="left:593.0px;top:297.1px;width:2px;height:3px;background:#6b7280;opacity:.8"></div>
<div class="b" style="left:596.0px;top:298.1px;width:9px;height:1px;background:#9ca3af;opacity:.6"></div>
<div class="b" style="left:398.3px;top:359.4px;width:60px;height:17px;box-sizing:border-box;border:1px solid #4a370d;border-radius:2px;background:#0e0e0e;box-shadow:0 0 2px #4a370d"></div>
<div class="b" style="left:400.1px;top:362.0px;width:5px;height:5px;background:#4a370d;border-radius:1px;opacity:.7"></div>
<div class="t" style="left:407.3px;top:362.4px;font-size:5px;font-weight:700;color:#ffffff;transform:scaleX(1);transform-origin:0 0;-webkit-text-stroke:0.2px #fff">gpt-4o</div>
<div class="b" style="left:446.8px;top:364.2px;width:8px;height:1px;background:#eab308"></div>
<div class="b" style="left:401.3px;top:371.9px;width:28px;height:1px;background:#9ca3af;opacity:.6"></div>
<div class="b" style="left:494.1px;top:359.4px;width:60px;height:17px;box-sizing:border-box;border:1px solid #0b3a2c;border-radius:2px;background:#0e0e0e;box-shadow:0 0 2px #0b3a2c"></div>
<div class="b" style="left:495.90000000000003px;top:362.0px;width:5px;height:5px;background:#0b3a2c;border-radius:1px;opacity:.7"></div>
<div class="t" style="left:503.1px;top:362.4px;font-size:5px;font-weight:700;color:#ffffff;transform:scaleX(0.9);transform-origin:0 0;-webkit-text-stroke:0.2px #fff">ToolUsage._use</div>
<div class="b" style="left:542.6px;top:364.2px;width:8px;height:1px;background:#10b981"></div>
<div class="b" style="left:496.6px;top:371.2px;width:2px;height:3px;background:#6b7280;opacity:.8"></div>
<div class="b" style="left:499.6px;top:372.2px;width:9px;height:1px;background:#9ca3af;opacity:.6"></div>
<div class="b" style="left:590.5px;top:359.4px;width:60px;height:17px;box-sizing:border-box;border:1px solid #4a370d;border-radius:2px;background:#0e0e0e;box-shadow:0 0 2px #4a370d"></div>
<div class="b" style="left:592.3px;top:362.0px;width:5px;height:5px;background:#4a370d;border-radius:1px;opacity:.7"></div>
<div class="t" style="left:599.5px;top:362.4px;font-size:5px;font-weight:700;color:#ffffff;transform:scaleX(0.85);transform-origin:0 0;-webkit-text-stroke:0.2px #fff">claude-3.7-sonnet</div>
<div class="b" style="left:639.0px;top:364.2px;width:8px;height:1px;background:#eab308"></div>
<div class="b" style="left:593.5px;top:371.9px;width:28px;height:1px;background:#9ca3af;opacity:.6"></div>
<div class="b" style="left:523.0px;top:150.0px;width:3px;height:3px;background:#8b5cf6"></div>
<div class="b" style="left:523.0px;top:208.5px;width:3px;height:3px;background:#10b981"></div>
<div class="b" style="left:523.0px;top:226.0px;width:3px;height:3px;background:#10b981"></div>
<div class="b" style="left:475.0px;top:283.0px;width:3px;height:3px;background:#d946ef"></div>
<div class="b" style="left:619.1px;top:283.0px;width:3px;height:3px;background:#d946ef"></div>
<div class="b" style="left:475.0px;top:300.5px;width:3px;height:3px;background:#d946ef"></div>
<div class="b" style="left:619.1px;top:300.5px;width:3px;height:3px;background:#d946ef"></div>
<div class="b" style="left:426.7px;top:358.0px;width:3px;height:3px;background:#eab308"></div>
<div class="b" style="left:522.7px;top:358.0px;width:3px;height:3px;background:#10b981"></div>
<div class="b" style="left:619.1px;top:358.0px;width:3px;height:3px;background:#eab308"></div>
<div class="b" style="left:523.0px;top:205.5px;width:3px;height:1.5px;background:#9ca3af"></div>
<div class="b" style="left:475.0px;top:280.5px;width:3px;height:1.5px;background:#9ca3af"></div>
<div class="b" style="left:619.1px;top:280.5px;width:3px;height:1.5px;background:#9ca3af"></div>
<div class="b" style="left:426.7px;top:355.5px;width:3px;height:1.5px;background:#9ca3af"></div>
<div class="b" style="left:522.7px;top:355.5px;width:3px;height:1.5px;background:#9ca3af"></div>
<div class="b" style="left:619.1px;top:355.5px;width:3px;height:1.5px;background:#9ca3af"></div>
<div class="t" style="left:114.4px;top:27.2px;font-size:13px;font-weight:400;color:#a1a1aa;transform:scaleX(0.9362);-webkit-text-stroke:0.15px currentColor">5 traces</div>
<div class="t" style="left:201.0px;top:27.2px;font-size:13px;font-weight:400;color:#a1a1aa;transform:scaleX(0.9306);-webkit-text-stroke:0.15px currentColor">4 minutes ago</div>
<div class="t" style="left:907.0px;top:26.9px;font-size:13px;font-weight:400;color:#a1a1aa;transform:scaleX(0.9376);-webkit-text-stroke:0.15px currentColor">5f26...8bb6</div>
<div class="t" style="left:65.5px;top:59.3px;font-size:15px;font-weight:700;color:#9ca3af;transform:scaleX(0.9507)">Cost</div>
<div class="t" style="left:65.5px;top:81.3px;font-size:15px;font-weight:700;color:#f4f4f5;transform:scaleX(0.9261)">$0.055</div>
<div class="t" style="left:326.4px;top:59.3px;font-size:15px;font-weight:700;color:#9ca3af;transform:scaleX(1.0203)">Input</div>
<div class="t" style="left:326.4px;top:81.3px;font-size:15px;font-weight:700;color:#f4f4f5;transform:scaleX(0.9029)">905</div>
<div class="t" style="left:353.7px;top:83.0px;font-size:13px;font-weight:400;color:#f4f4f5;transform:scaleX(0.9736);-webkit-text-stroke:0.35px currentColor">tokens</div>
<div class="t" style="left:609.7px;top:59.3px;font-size:15px;font-weight:700;color:#9ca3af;transform:scaleX(1.0334)">Output</div>
<div class="t" style="left:609.7px;top:81.3px;font-size:15px;font-weight:700;color:#f4f4f5;transform:scaleX(0.9327)">10,060</div>
<div class="t" style="left:656.6px;top:83.0px;font-size:13px;font-weight:400;color:#f4f4f5;transform:scaleX(0.9762);-webkit-text-stroke:0.35px currentColor">tokens</div>
<div class="t" style="left:912.0px;top:59.3px;font-size:15px;font-weight:700;color:#9ca3af;transform:scaleX(1.0134)">Duration</div>
<div class="t" style="left:912.0px;top:81.3px;font-size:15px;font-weight:700;color:#f4f4f5;transform:scaleX(0.9268)">64.77</div>
<div class="t" style="left:951.6px;top:83.0px;font-size:13px;font-weight:400;color:#f4f4f5;transform:scaleX(0.9128);-webkit-text-stroke:0.35px currentColor">seconds</div>
<div class="t" style="left:1104.4px;top:18.1px;font-size:14px;font-weight:600;color:#f4f4f5;transform:scaleX(0.8412)">Crew.kickoff</div>
<div class="t" style="left:1487.7px;top:19.0px;font-size:13px;font-weight:600;color:#ffffff;transform:scaleX(0.8077)">UI</div>
<div class="t" style="left:1531.0px;top:19.0px;font-size:13px;font-weight:400;color:#9ca3af;transform:scaleX(0.8941);-webkit-text-stroke:0.35px currentColor">JSON</div>
<div class="t" style="left:1535.9px;top:74.7px;font-size:13px;font-weight:700;color:#25c4ae;transform:scaleX(0.8924)">CrewAI SDK</div>
<div class="t" style="left:1096.0px;top:117.0px;font-size:13px;font-weight:400;color:#e4e4e7;transform:scaleX(0.8871);-webkit-text-stroke:0.35px currentColor">Trace ID:</div>
<div class="t" style="left:1177.0px;top:117.0px;font-size:13px;font-weight:400;color:#25c4ae;transform:scaleX(0.9342);-webkit-text-stroke:0.15px currentColor">5f2613da-8371-9405-fcdd-0a1534cc8bb6</div>
<div class="t" style="left:1096.0px;top:157.8px;font-size:13px;font-weight:400;color:#e4e4e7;transform:scaleX(0.9003);-webkit-text-stroke:0.35px currentColor">Thread ID:</div>
<div class="t" style="left:1177.0px;top:157.8px;font-size:13px;font-weight:400;color:#25c4ae;transform:scaleX(0.9342);-webkit-text-stroke:0.15px currentColor">5f2613da-8371-9405-fcdd-0a1534cc8bb6</div>
<div class="t" style="left:1096.0px;top:197.2px;font-size:13px;font-weight:400;color:#e4e4e7;transform:scaleX(0.9620);-webkit-text-stroke:0.35px currentColor">Start time:</div>
<div class="t" style="left:1177.0px;top:197.2px;font-size:13px;font-weight:400;color:#25c4ae;transform:scaleX(0.9201);-webkit-text-stroke:0.15px currentColor">07/01/2025, 06:05:30 AM UTC</div>
<div class="t" style="left:1096.0px;top:234.2px;font-size:13px;font-weight:400;color:#e4e4e7;transform:scaleX(0.9298);-webkit-text-stroke:0.35px currentColor">Finish time:</div>
<div class="t" style="left:1177.0px;top:234.2px;font-size:13px;font-weight:400;color:#25c4ae;transform:scaleX(0.9201);-webkit-text-stroke:0.15px currentColor">07/01/2025, 06:06:37 AM UTC</div>
<div class="t" style="left:1096.0px;top:271.3px;font-size:13px;font-weight:400;color:#e4e4e7;transform:scaleX(0.9668);-webkit-text-stroke:0.35px currentColor">Duration:</div>
<div class="t" style="left:1177.0px;top:271.3px;font-size:13px;font-weight:400;color:#25c4ae;transform:scaleX(0.9040);-webkit-text-stroke:0.15px currentColor">67.00s</div>
<div class="t" style="left:1096.0px;top:308.4px;font-size:13px;font-weight:400;color:#e4e4e7;transform:scaleX(0.8930);-webkit-text-stroke:0.35px currentColor">Span Kind:</div>
<div class="t" style="left:1177.0px;top:308.4px;font-size:13px;font-weight:400;color:#25c4ae;transform:scaleX(0.8726);-webkit-text-stroke:0.15px currentColor">CHAIN</div>
<div class="t" style="left:1098.0px;top:346.3px;font-size:14px;font-weight:600;color:#f4f4f5;transform:scaleX(0.8665)">Attributes</div>
<div class="t" style="left:396.7px;top:418.7px;font-size:11px;font-weight:700;color:#e5e5e5;transform:scaleX(0.8823)">0.0s</div>
<div class="t" style="left:544.7px;top:418.7px;font-size:11px;font-weight:700;color:#e5e5e5;transform:scaleX(0.8645)">16.8s</div>
<div class="t" style="left:703.8px;top:418.7px;font-size:11px;font-weight:700;color:#e5e5e5;transform:scaleX(0.9008)">33.5s</div>
<div class="t" style="left:864.4px;top:418.7px;font-size:11px;font-weight:700;color:#e5e5e5;transform:scaleX(0.8645)">50.3s</div>
<div class="t" style="left:1011.9px;top:418.7px;font-size:11px;font-weight:700;color:#e5e5e5;transform:scaleX(0.8645)">67.0s</div>
<div class="t" style="left:50.3px;top:452.7px;font-size:14.5px;font-weight:400;color:#dcdce0;transform:scaleX(1.0102);-webkit-text-stroke:0.15px currentColor">Crew.kickoff</div>
<div class="t" style="left:350.1px;top:453.1px;font-size:14px;font-weight:400;color:#60a5fa;transform:scaleX(0.9918);-webkit-text-stroke:0.35px currentColor">67.00s</div>
<div class="t" style="left:62.4px;top:491.7px;font-size:14.5px;font-weight:400;color:#dcdce0;transform:scaleX(0.9410);-webkit-text-stroke:0.15px currentColor">Research Specialist</div>
<div class="t" style="left:350.1px;top:492.1px;font-size:14px;font-weight:400;color:#60a5fa;transform:scaleX(0.9918);-webkit-text-stroke:0.35px currentColor">32.41s</div>
<div class="t" style="left:74.2px;top:530.7px;font-size:14.5px;font-weight:400;color:#dcdce0;transform:scaleX(0.9970);-webkit-text-stroke:0.15px currentColor">gpt-4o</div>
<div class="t" style="left:358.2px;top:531.1px;font-size:14px;font-weight:400;color:#60a5fa;transform:scaleX(0.9810);-webkit-text-stroke:0.35px currentColor">1.40s</div>
<div class="t" style="left:74.2px;top:569.7px;font-size:14.5px;font-weight:400;color:#dcdce0;transform:scaleX(0.9970);-webkit-text-stroke:0.15px currentColor">gpt-4o</div>
<div class="t" style="left:358.2px;top:570.1px;font-size:14px;font-weight:400;color:#60a5fa;transform:scaleX(0.9810);-webkit-text-stroke:0.35px currentColor">1.87s</div>
<div class="t" style="left:74.2px;top:608.7px;font-size:14.5px;font-weight:400;color:#dcdce0;transform:scaleX(0.9970);-webkit-text-stroke:0.15px currentColor">gpt-4o</div>
<div class="t" style="left:358.2px;top:609.1px;font-size:14px;font-weight:400;color:#60a5fa;transform:scaleX(0.9810);-webkit-text-stroke:0.35px currentColor">1.35s</div>
<div class="t" style="left:74.2px;top:647.7px;font-size:14.5px;font-weight:400;color:#dcdce0;transform:scaleX(0.9471);-webkit-text-stroke:0.15px currentColor">ToolUsage._use</div>
<div class="t" style="left:358.2px;top:648.1px;font-size:14px;font-weight:400;color:#60a5fa;transform:scaleX(0.9810);-webkit-text-stroke:0.35px currentColor">1.49s</div>
<div class="t" style="left:74.2px;top:686.7px;font-size:14.5px;font-weight:400;color:#dcdce0;transform:scaleX(0.9970);-webkit-text-stroke:0.15px currentColor">gpt-4o</div>
<div class="t" style="left:350.1px;top:687.1px;font-size:14px;font-weight:400;color:#60a5fa;transform:scaleX(0.9918);-webkit-text-stroke:0.35px currentColor">12.26s</div>
<div class="t" style="left:62.2px;top:725.7px;font-size:14.5px;font-weight:400;color:#dcdce0;transform:scaleX(0.9781);-webkit-text-stroke:0.15px currentColor">Strategic Planner</div>
<div class="t" style="left:350.1px;top:726.1px;font-size:14px;font-weight:400;color:#60a5fa;transform:scaleX(0.9918);-webkit-text-stroke:0.35px currentColor">33.94s</div>
<div class="t" style="left:74.4px;top:764.7px;font-size:14.5px;font-weight:400;color:#dcdce0;transform:scaleX(0.9735);-webkit-text-stroke:0.15px currentColor">claude-3.7-sonnet</div>
<div class="t" style="left:350.1px;top:765.1px;font-size:14px;font-weight:400;color:#60a5fa;transform:scaleX(0.9918);-webkit-text-stroke:0.35px currentColor">32.73s</div>
</body></html>
